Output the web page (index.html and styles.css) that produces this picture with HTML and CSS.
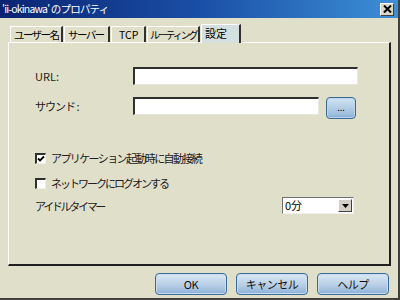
FILE: index.html
```html
<!DOCTYPE html>
<html lang="ja">
<head>
<meta charset="utf-8">
<link rel="stylesheet" href="styles.css">
</head>
<body>
<div class="window">
  <div class="titlebar">
    <span class="title">'ii-okinawa' のプロパティ</span>
    <span class="close"><svg width="9" height="8" viewBox="0 0 9 8"><path d="M1 0.5L8 7.5M8 0.5L1 7.5" stroke="#000" stroke-width="2"/></svg></span>
  </div>
  <div class="body">
    <div class="tabs">
      <div class="tab t1">ユーザー名</div>
      <div class="tab t2">サーバー</div>
      <div class="tab t3">TCP</div>
      <div class="tab t4">ルーティング</div>
      <div class="tab active">設定</div>
    </div>
    <div class="panel">
      <div class="row r-url">
        <span class="label">URL:</span>
        <span class="input wide"></span>
      </div>
      <div class="row r-sound">
        <span class="label kana">サウンド :</span>
        <span class="input narrow"></span>
        <span class="browse">...</span>
      </div>
      <div class="check c1"><span class="box checked"><svg width="8" height="8" viewBox="0 0 8 8"><path d="M1 3.5L3 5.5L7 1.5" stroke="#000" stroke-width="1.8" fill="none"/></svg></span><span class="txt1">アプリケーション起動時に自動接続</span></div>
      <div class="check c2"><span class="box"></span><span class="txt2">ネットワークにログオンする</span></div>
      <div class="row r-idle">
        <span class="label idle">アイドルタイマー</span>
        <span class="select"><span class="val">0分</span><span class="arrow"><svg width="7" height="4" viewBox="0 0 7 4"><path d="M0 0H7L3.5 4Z" fill="#000"/></svg></span></span>
      </div>
    </div>
  </div>
  <div class="buttons">
    <span class="btn">OK</span>
    <span class="btn">キャンセル</span>
    <span class="btn">ヘルプ</span>
  </div>
</div>
</body>
</html>
```
FILE: styles.css
```css
html, body {
  margin: 0;
  padding: 0;
  background: #e0dfca;
}
body {
  font-family: "Noto Sans CJK JP", "DejaVu Sans", sans-serif;
  font-size: 11px;
  color: #000;
}
.window {
  width: 400px;
  height: 300px;
  box-sizing: border-box;
  display: flex;
  flex-direction: column;
  background: #e0dfca;
  border-right: 2px solid #404040;
  border-bottom: 2px solid #404040;
}
.titlebar {
  height: 18px;
  flex: none;
  display: flex;
  align-items: center;
  justify-content: space-between;
  padding: 0 4px 0 2px;
  background: linear-gradient(90deg, #0a2472 0%, #1a4fa6 50%, #3d8fd6 100%);
  color: #fff;
}
.title {
  font-size: 10.5px;
  line-height: 18px;
  letter-spacing: -0.8px;
}
.close {
  width: 12px;
  height: 11px;
  background: #d9d6c2;
  border-top: 1px solid #fff;
  border-left: 1px solid #fff;
  border-right: 1px solid #404040;
  border-bottom: 1px solid #404040;
  display: flex;
  align-items: center;
  justify-content: center;
}
.body {
  flex: 1;
  display: flex;
  flex-direction: column;
  padding: 6px 7px 0 8px;
}
.tabs {
  display: flex;
  align-items: flex-end;
  height: 18px;
  padding-left: 2px;
}
.tab {
  height: 16px;
  flex: none;
  box-sizing: border-box;
  font-size: 10.5px;
  line-height: 15px;
  padding: 0 1px 0 3px;
  white-space: nowrap;
  overflow: hidden;
  letter-spacing: -1.6px;
  border-top: 1px solid #fff;
  border-left: 1px solid #fff;
  border-right: 2px solid #303030;
  background: #e0dfca;
  margin-right: 1px;
}
.t1 { width: 53px; }
.t2 { width: 46px; }
.t3 { width: 35px; padding-left: 7px; letter-spacing: 0; }
.t4 { width: 53px; font-size: 10px; letter-spacing: -2.2px; padding: 0 0 0 2px; }
.tab.active {
  height: 19px;
  width: 40px;
  background: #d4e0e0;
  font-size: 11px;
  line-height: 17px;
  letter-spacing: 0;
  margin-bottom: -1px;
  position: relative;
  z-index: 1;
}
.panel {
  height: 224px;
  box-sizing: border-box;
  border-top: 1px solid #fff;
  border-left: 1px solid #fff;
  border-right: 2px solid #202020;
  border-bottom: 2px solid #202020;
  padding: 24px 0 0 26px;
  display: flex;
  flex-direction: column;
}
.row {
  display: flex;
  align-items: center;
}
.label {
  width: 98px;
  flex: none;
  color: #202020;
}
.kana { letter-spacing: -1px; }
.input {
  height: 18px;
  box-sizing: border-box;
  background: #fff;
  border-top: 2px solid #303030;
  border-left: 2px solid #303030;
  border-right: 1px solid #e8e8e0;
  border-bottom: 1px solid #e8e8e0;
}
.wide { width: 225px; }
.narrow { width: 186px; }
.r-sound {
  margin-top: 8px;
}
.browse {
  width: 30px;
  height: 22px;
  margin-left: 7px;
  margin-top: 4px;
  box-sizing: border-box;
  border: 1px solid #3a6a98;
  border-radius: 4px;
  background: linear-gradient(#d4e4f4, #9cbcdc 85%, #7aa4d0);
  font-size: 9px;
  line-height: 20px;
  text-align: center;
  box-shadow: inset 0 0 0 1px #bcd4ec;
}
.check {
  display: flex;
  align-items: center;
  color: #202020;
}
.c1 { margin-top: 31px; }
.c2 { margin-top: 9px; }
.txt1 { letter-spacing: -1.6px; }
.txt2 { letter-spacing: -2px; }
.box {
  width: 11px;
  height: 11px;
  box-sizing: border-box;
  background: #fff;
  border-top: 2px solid #303030;
  border-left: 2px solid #303030;
  border-right: 1px solid #f0f0f0;
  border-bottom: 1px solid #f0f0f0;
  margin-right: 5px;
  display: flex;
  align-items: center;
  justify-content: center;
}
.r-idle {
  margin-top: 6px;
}
.r-idle .label {
  width: 247px;
}
.idle { letter-spacing: -2.3px; }
.select {
  width: 72px;
  height: 17px;
  box-sizing: border-box;
  background: #fff;
  border-top: 1px solid #707070;
  border-left: 1px solid #707070;
  border-right: 1px solid #f0f0f0;
  border-bottom: 1px solid #f0f0f0;
  display: flex;
  align-items: center;
  justify-content: space-between;
}
.val {
  padding-left: 2px;
  line-height: 15px;
}
.arrow {
  width: 14px;
  height: 13px;
  margin-right: 1px;
  box-sizing: border-box;
  background: #d4d0c8;
  border-top: 1px solid #fff;
  border-left: 1px solid #fff;
  border-right: 1px solid #404040;
  border-bottom: 1px solid #404040;
  display: flex;
  align-items: center;
  justify-content: center;
}
.buttons {
  flex: none;
  height: 30px;
  display: flex;
  justify-content: flex-end;
  align-items: flex-start;
  gap: 9px;
  padding: 5px 9px 0 0;
  box-sizing: border-box;
}
.btn {
  width: 72px;
  height: 22px;
  box-sizing: border-box;
  border: 1px solid #3c6c9c;
  border-radius: 4px;
  background: linear-gradient(#dce8f4, #b4cce4 60%, #8cb0d8);
  box-shadow: inset 0 0 0 1px #c8dcf0;
  text-align: center;
  line-height: 20px;
  color: #101010;
  letter-spacing: -0.5px;
}
```
